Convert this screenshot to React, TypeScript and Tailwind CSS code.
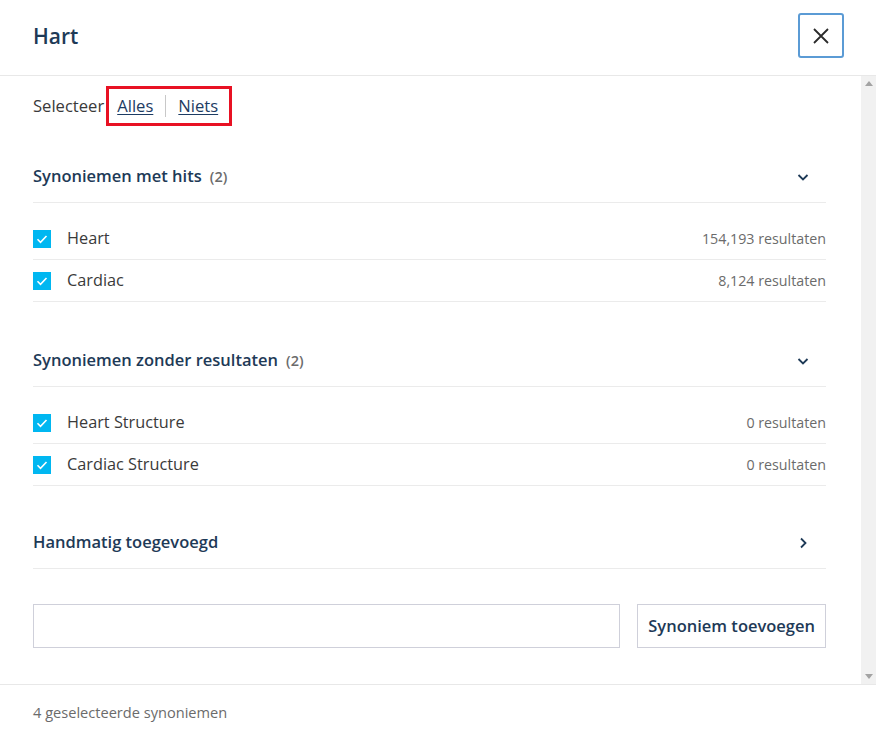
import React from "react";

const FONT = { fontFamily: '"Segoe UI", "Open Sans", "Noto Sans", sans-serif' };

type Syn = { label: string; count: string };

const withHits: Syn[] = [
  { label: "Heart", count: "154,193 resultaten" },
  { label: "Cardiac", count: "8,124 resultaten" },
];

const noResults: Syn[] = [
  { label: "Heart Structure", count: "0 resultaten" },
  { label: "Cardiac Structure", count: "0 resultaten" },
];

function ChevronDown() {
  return (
    <svg width="14" height="14" viewBox="0 0 14 14" fill="none">
      <path d="M2.5 5l4.5 4.5L11.5 5" stroke="#1e3a57" strokeWidth="1.8" />
    </svg>
  );
}

function ChevronRight() {
  return (
    <svg width="14" height="14" viewBox="0 0 14 14" fill="none">
      <path d="M5 2.5l4.5 4.5L5 11.5" stroke="#1e3a57" strokeWidth="1.8" />
    </svg>
  );
}

function Check() {
  return (
    <span className="flex h-[18px] w-[18px] shrink-0 items-center justify-center bg-[#00b7f1]">
      <svg width="18" height="18" viewBox="0 0 18 18" fill="none">
        <path d="M4.5 9.3l3 3 6-6.3" stroke="#fff" strokeWidth="1.6" />
      </svg>
    </span>
  );
}

function SectionHeader({ title, count, open = true }: { title: string; count?: number; open?: boolean }) {
  return (
    <div className="flex h-[52px] items-center justify-between border-b border-[#ebebeb] pr-[16px]">
      <div className="flex items-baseline gap-2">
        <span className="text-[16.5px] font-semibold text-[#1e3a57]">{title}</span>
        {count !== undefined && <span className="text-[14.5px] font-semibold text-[#6b6b6b]">({count})</span>}
      </div>
      {open ? <ChevronDown /> : <ChevronRight />}
    </div>
  );
}

function SynList({ items }: { items: Syn[] }) {
  return (
    <div className="pt-[15px]">
      {items.map((s) => (
        <div key={s.label} className="flex h-[42px] items-center justify-between border-b border-[#ebebeb]">
          <div className="flex items-center gap-[16px]">
            <Check />
            <span className="text-[16.3px] text-[#3a3a3a]">{s.label}</span>
          </div>
          <span className="text-[14.25px] text-[#6b6b6b]">{s.count}</span>
        </div>
      ))}
    </div>
  );
}

export default function App() {
  return (
    <div className="flex h-[737px] w-[876px] flex-col bg-white" style={FONT}>
      {/* HEADER */}
      <div className="flex h-[76px] shrink-0 items-center justify-between border-b border-[#e8e8e8] pl-[33px] pr-[32px]">
        <h1 className="mb-[1px] text-[21px] font-semibold text-[#1e3a57]">Hart</h1>
        <button className="mb-[4px] flex h-[45px] w-[46px] items-center justify-center rounded-[3px] border-2 border-[#5b9bd5]">
          <svg width="18" height="18" viewBox="0 0 18 18" fill="none">
            <path d="M2 2l14 14M16 2L2 16" stroke="#2b2b2b" strokeWidth="1.8" />
          </svg>
        </button>
      </div>

      {/* BODY */}
      <div className="flex min-h-0 flex-1">
        <div className="flex-1 pl-[33px] pr-[35px]">
          {/* SELECT ALL / NONE */}
          <div className="flex h-[60px] items-center">
            <span className="text-[16.6px] text-[#3a3a3a]">Selecteer</span>
            <div className="ml-[2px] flex h-[40px] items-center border-[3px] border-[#e81123] pl-[8px] pr-[11px]">
              <a className="text-[16.6px] text-[#1d3c63] underline underline-offset-2" href="#">Alles</a>
              <span className="mx-[12px] h-[22px] w-[1px] bg-[#c8c8c8]"></span>
              <a className="text-[16.6px] text-[#1d3c63] underline underline-offset-2" href="#">Niets</a>
            </div>
          </div>

          <div className="pt-[15px]">
            <SectionHeader title="Synoniemen met hits" count={2} />
            <SynList items={withHits} />
          </div>

          <div className="pt-[33px]">
            <SectionHeader title="Synoniemen zonder resultaten" count={2} />
            <SynList items={noResults} />
          </div>

          <div className="pt-[31px]">
            <SectionHeader title="Handmatig toegevoegd" open={false} />
          </div>

          {/* ADD SYNONYM */}
          <div className="mt-[35px] flex gap-[17px]">
            <input className="h-[44px] flex-1 border border-[#cfd0da] px-3 text-[16px] outline-none" />
            <button className="h-[44px] border border-[#cfd0da] px-[10px] text-[16.5px] font-semibold text-[#1e3a57]">
              Synoniem toevoegen
            </button>
          </div>
        </div>

        {/* SCROLLBAR */}
        <div className="flex w-[15px] shrink-0 flex-col items-center justify-between bg-[#f1f1f1] py-[5px]">
          <svg width="8" height="5" viewBox="0 0 8 5"><path d="M0 5L4 0l4 5z" fill="#a3a3a3" /></svg>
          <svg width="8" height="5" viewBox="0 0 8 5"><path d="M0 0h8L4 5z" fill="#a3a3a3" /></svg>
        </div>
      </div>

      {/* FOOTER */}
      <div className="flex h-[53px] shrink-0 items-center border-t border-[#e8e8e8] pl-[33px] pt-[3px]">
        <span className="text-[14.6px] text-[#6b6b6b]">4 geselecteerde synoniemen</span>
      </div>
    </div>
  );
}
